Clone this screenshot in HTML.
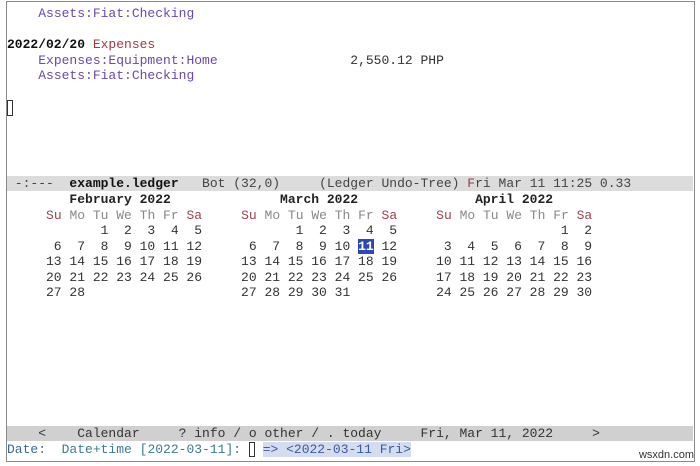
<!DOCTYPE html>
<html><head><style>
body{margin:0;width:700px;height:466px;background:#fff;overflow:hidden;position:relative;font-family:"Liberation Mono",monospace;font-size:13px;}
#frame{position:absolute;left:6px;top:1px;width:687px;height:459px;border:1px solid #8a8a8a;}
.l{position:absolute;left:7px;white-space:pre;height:15.5px;line-height:15.5px;color:#333;}
.p{color:#6a48b0}.r{color:#a03848}.b{font-weight:bold;color:#111}
.ml{left:7px;width:686px;background:#dcdcdc;color:#444}
.wd{color:#888}.we{color:#a04050}
.hl{background:#2a48b8;color:#fff;font-weight:bold}
.cur{display:inline-block;width:6px;height:14px;border:1px solid #333;vertical-align:middle;box-sizing:border-box}
.mb{color:#3a6a9a}.tl{color:#3e7a8a}.sel{background:#d4ddf0;color:#3a5a9a}
</style></head><body>
<div id="frame"></div>
<div class="l" style="top:6px">    <span class="p">Assets:Fiat:Checking</span></div>
<div class="l" style="top:37px"><span class="b">2022/02/20</span> <span class="r">Expenses</span></div>
<div class="l" style="top:52.5px">    <span class="p">Expenses:Equipment:Home</span>                 2,550.12 PHP</div>
<div class="l" style="top:68px">    <span class="p">Assets:Fiat:Checking</span></div>
<div class="l" style="top:100px"><span class="cur" style="height:16px"></span></div>
<div class="l ml" style="top:176px;height:15px;line-height:15px"> -:---  <span class="b">example.ledger</span>   Bot (32,0)     (Ledger Undo-Tree) <span class="r">F</span>ri Mar 11 11:25 0.33</div>
<div class="l b" style="top:192px;color:#222">        February 2022              March 2022               April 2022</div>
<div class="l" style="top:207.5px">     <span class="we">Su</span> <span class="wd">Mo Tu We Th Fr</span> <span class="we">Sa</span>     <span class="we">Su</span> <span class="wd">Mo Tu We Th Fr</span> <span class="we">Sa</span>     <span class="we">Su</span> <span class="wd">Mo Tu We Th Fr</span> <span class="we">Sa</span></div>
<div class="l" style="top:223px">            1  2  3  4  5            1  2  3  4  5                     1  2</div>
<div class="l" style="top:238.5px">      6  7  8  9 10 11 12      6  7  8  9 10 <span class="hl">11</span> 12      3  4  5  6  7  8  9</div>
<div class="l" style="top:254px">     13 14 15 16 17 18 19     13 14 15 16 17 18 19     10 11 12 13 14 15 16</div>
<div class="l" style="top:269.5px">     20 21 22 23 24 25 26     20 21 22 23 24 25 26     17 18 19 20 21 22 23</div>
<div class="l" style="top:285px">     27 28                    27 28 29 30 31           24 25 26 27 28 29 30</div>
<div class="l ml" style="top:426px;height:15px;line-height:15px;background:#d0d0d0;color:#333">    &lt;    Calendar     ? info / o other / . today     Fri, Mar 11, 2022     &gt;</div>
<div class="l" style="top:442px"><span class="mb">Date:</span>  <span class="tl">Date+time [2022-03-11]:</span> <span class="cur" style="height:15px"></span> <span class="sel">=&gt; &lt;2022-03-11 Fri&gt;</span></div>
<div style="position:absolute;right:6px;top:449px;font-family:'Liberation Sans',sans-serif;font-size:11px;color:#333">wsxdn.com</div>
</body></html>
